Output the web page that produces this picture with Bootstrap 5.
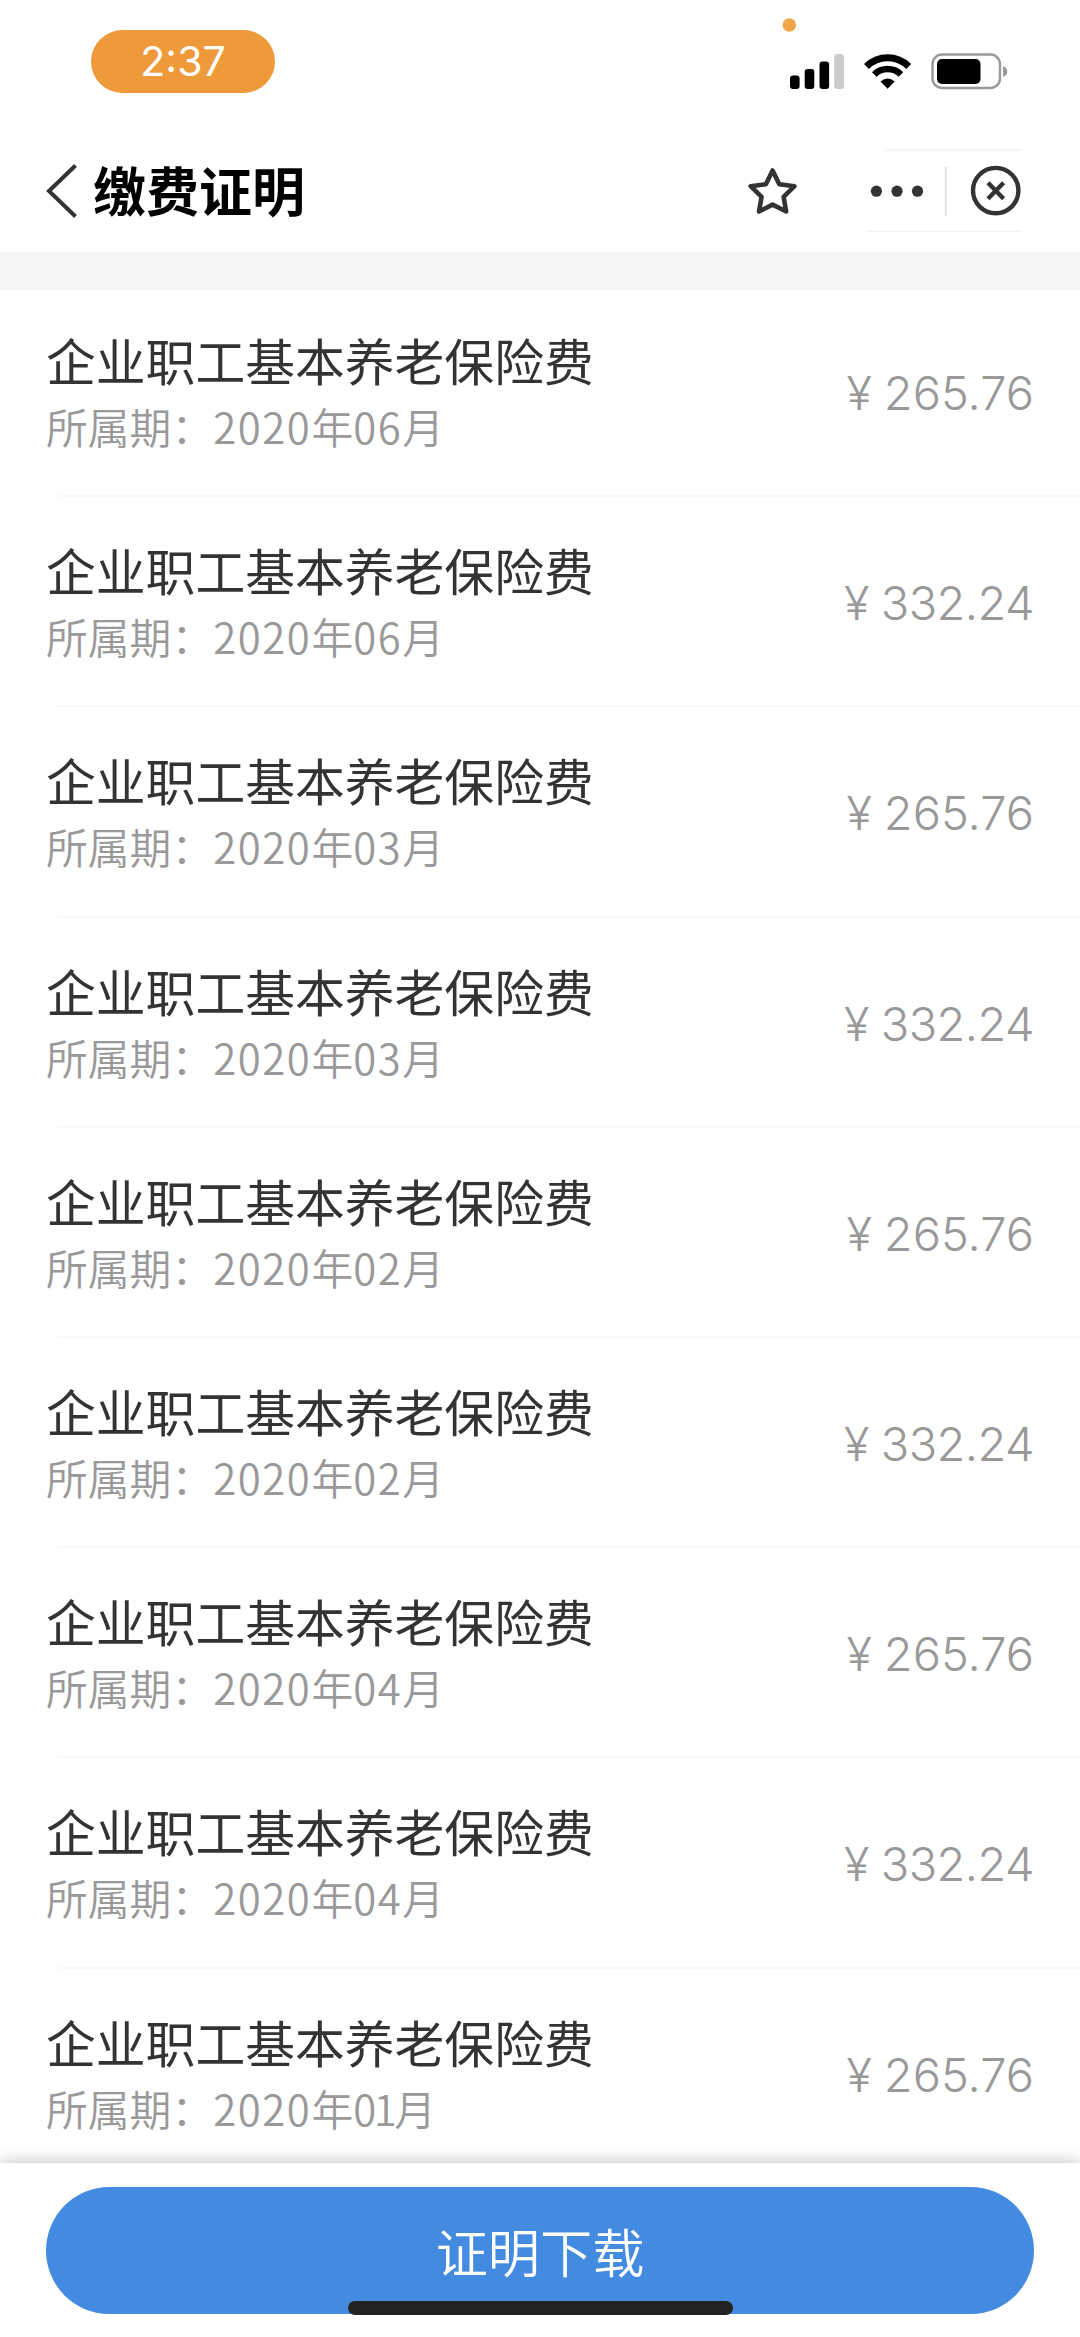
<!DOCTYPE html>
<html lang="zh-CN">
<head>
<meta charset="utf-8">
<meta name="viewport" content="width=device-width, initial-scale=1">
<title>缴费证明</title>
<link href="https://cdn.jsdelivr.net/npm/bootstrap@5.3.0/dist/css/bootstrap.min.css" rel="stylesheet">
<style>
body{font-family:"Noto Sans CJK SC",sans-serif;background:#fff;color:#333}
.screen{width:1080px;height:2337px}
.status-bar{height:125px;padding:30px 72px 0 91px}
.time-pill{width:184px;height:63px;background:#ee9a3b;font:400 41px/63px Inter,sans-serif}
.status-icons{margin-top:-14px}
.title-bar{height:127px;padding:4px 45px 0 45px}
.page-title{font-size:53px;line-height:60px;font-weight:700;color:#000;margin:-4px 0 0 15px}
.band{height:38px;background:#f5f5f5}
.pay-list{height:1873px}
.pay-row{height:210.2px;padding:38px 46px 0 46px}
.pay-row:first-child{height:205.2px;padding-top:33px}
.pay-row + .pay-row::before{content:"";position:absolute;left:58px;right:0;top:0;height:2px;background:#f8f8f8}
.pay-name{font-size:49.8px;line-height:72px}
.pay-term{font-size:41.8px;line-height:58px;color:#999;font-weight:350;margin-top:2px}
.num{letter-spacing:1.6px}
.num-tight{letter-spacing:-2.4px}
.pay-sum{font:350 47px/60px Inter,sans-serif;color:#999;margin-top:40px;letter-spacing:-.6px}
.sum-wide{letter-spacing:0}
.yen{margin-right:12px}
.foot{height:174px;padding:24px 46px 0;box-shadow:0 -2px 14px rgba(0,0,0,.22);z-index:2}
.btn-get{height:127px;background:#438be0;color:#fff;font-size:52.2px;font-weight:350;line-height:1;border:0}
.btn-get:hover{background:#438be0;color:#fff}
.home-bar{left:348px;top:138px;width:385px;height:14px;background:#222}
</style>
</head>
<body>
<div class="screen d-flex flex-column overflow-hidden position-relative">
  <header class="status-bar d-flex justify-content-between align-items-start">
    <div class="time-pill rounded-pill text-white text-center">2:37</div>
    <svg class="status-icons" width="228" height="76" viewBox="780 16 228 76">
      <circle cx="789.3" cy="25" r="6.7" fill="#f0a44b"/>
      <rect x="790" y="75.5" width="9.6" height="13.5" rx="3"/>
      <rect x="804.7" y="69" width="9.6" height="20" rx="3"/>
      <rect x="819.5" y="61.5" width="9.6" height="27.5" rx="3"/>
      <rect x="834.2" y="54" width="9.8" height="35" rx="3" fill="#ccc"/>
      <g fill="none" stroke="#000">
        <path d="M866.5 66.5A30 30 0 0 1 908.7 66.5" stroke-width="7"/>
        <path d="M874.3 74.5A19 19 0 0 1 900.9 74.5" stroke-width="6.6"/>
      </g>
      <path d="M880.5 81.5Q887.6 75.5 894.7 81.5L887.6 88.8Z"/>
      <rect x="932.5" y="54.5" width="67.5" height="33.5" rx="9.5" fill="#fff" stroke="#999" stroke-width="2.4"/>
      <rect x="937" y="59" width="43.5" height="25" rx="5"/>
      <path d="M1003 66Q1007.3 67.5 1007.3 71.5T1003 77Z" fill="#999"/>
    </svg>
  </header>
  <nav class="title-bar d-flex align-items-center">
    <svg width="33" height="56" viewBox="45 163 33 56"><path d="M75.5 165.5L49 191L75.5 216.5" fill="none" stroke="#333" stroke-width="4"/></svg>
    <h1 class="page-title">缴费证明</h1>
    <svg class="ms-auto" width="290" height="90" viewBox="745 146 290 90">
      <path d="M772.6 170.5L779.3 184.2L794.5 186.2L783.6 196.8L786.2 211.5L772.6 204.6L759 211.5L761.6 196.8L750.7 186.2L765.9 184.2Z" fill="none" stroke="#333" stroke-width="4.6" stroke-linejoin="round"/>
      <path d="M885 150H1020M868 231.5H1020" stroke="#f2f2f2" stroke-width="1.5"/>
      <g fill="#333"><circle cx="876.4" cy="191.2" r="5.6"/><circle cx="897" cy="191.2" r="5.6"/><circle cx="917.5" cy="191.2" r="5.6"/></g>
      <path d="M945.8 167V216" stroke="#d0d0d0" stroke-width="1.2"/>
      <circle cx="995.7" cy="190.6" r="22.7" fill="none" stroke="#333" stroke-width="4.4"/>
      <path d="M988 182.7L1003.6 198.7M1003.6 182.7L988 198.7" stroke="#333" stroke-width="4.4"/>
    </svg>
  </nav>
  <div class="band"></div>
  <main class="pay-list overflow-hidden">
    <div class="pay-row position-relative d-flex justify-content-between"><div><div class="pay-name">企业职工基本养老保险费</div><div class="pay-term">所属期：<span class="num">2020</span>年<span class="num">06</span>月</div></div><div class="pay-sum sum-wide"><span class="yen">¥</span>265.76</div></div>
    <div class="pay-row position-relative d-flex justify-content-between"><div><div class="pay-name">企业职工基本养老保险费</div><div class="pay-term">所属期：<span class="num">2020</span>年<span class="num">06</span>月</div></div><div class="pay-sum"><span class="yen">¥</span>332.24</div></div>
    <div class="pay-row position-relative d-flex justify-content-between"><div><div class="pay-name">企业职工基本养老保险费</div><div class="pay-term">所属期：<span class="num">2020</span>年<span class="num">03</span>月</div></div><div class="pay-sum sum-wide"><span class="yen">¥</span>265.76</div></div>
    <div class="pay-row position-relative d-flex justify-content-between"><div><div class="pay-name">企业职工基本养老保险费</div><div class="pay-term">所属期：<span class="num">2020</span>年<span class="num">03</span>月</div></div><div class="pay-sum"><span class="yen">¥</span>332.24</div></div>
    <div class="pay-row position-relative d-flex justify-content-between"><div><div class="pay-name">企业职工基本养老保险费</div><div class="pay-term">所属期：<span class="num">2020</span>年<span class="num">02</span>月</div></div><div class="pay-sum sum-wide"><span class="yen">¥</span>265.76</div></div>
    <div class="pay-row position-relative d-flex justify-content-between"><div><div class="pay-name">企业职工基本养老保险费</div><div class="pay-term">所属期：<span class="num">2020</span>年<span class="num">02</span>月</div></div><div class="pay-sum"><span class="yen">¥</span>332.24</div></div>
    <div class="pay-row position-relative d-flex justify-content-between"><div><div class="pay-name">企业职工基本养老保险费</div><div class="pay-term">所属期：<span class="num">2020</span>年<span class="num">04</span>月</div></div><div class="pay-sum sum-wide"><span class="yen">¥</span>265.76</div></div>
    <div class="pay-row position-relative d-flex justify-content-between"><div><div class="pay-name">企业职工基本养老保险费</div><div class="pay-term">所属期：<span class="num">2020</span>年<span class="num">04</span>月</div></div><div class="pay-sum"><span class="yen">¥</span>332.24</div></div>
    <div class="pay-row position-relative d-flex justify-content-between"><div><div class="pay-name">企业职工基本养老保险费</div><div class="pay-term">所属期：<span class="num">2020</span>年<span class="num-tight">01</span>月</div></div><div class="pay-sum sum-wide"><span class="yen">¥</span>265.76</div></div>
  </main>
  <footer class="foot bg-white position-relative">
    <button type="button" class="btn btn-get rounded-pill w-100">证明下载</button>
    <div class="home-bar position-absolute rounded-pill"></div>
  </footer>
</div>
<script src="https://cdn.jsdelivr.net/npm/bootstrap@5.3.0/dist/js/bootstrap.bundle.min.js"></script>
</body>
</html>
